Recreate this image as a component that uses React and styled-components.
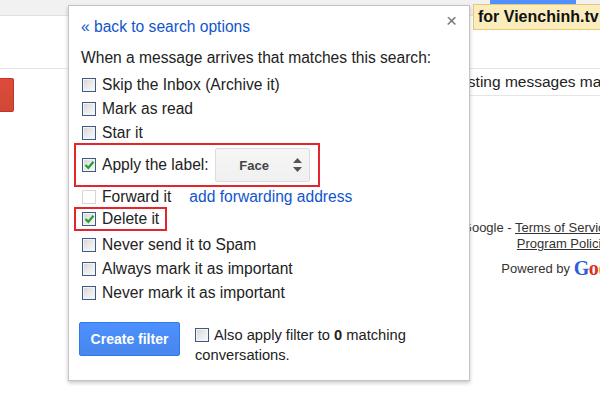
import React from 'react';
import styled, { createGlobalStyle } from 'styled-components';

const GlobalStyle = createGlobalStyle`
  html, body { margin: 0; padding: 0; background: #fff; }
  body {
    font-family: "Liberation Sans", Arial, sans-serif;
    color: #222;
    overflow: hidden;
  }
  * { box-sizing: border-box; }
`;

const Page = styled.div`
  position: relative;
  width: 600px;
  height: 402px;
  overflow: hidden;
  background: #fff;
`;

const TopBar = styled.div`
  height: 16px;
  background: #f1f1f1;
  border-bottom: 1px solid #e1e1e1;
`;

const Toolbar = styled.div`
  height: 53px;
  border-bottom: 1px solid #e5e5e5;
`;

const Body = styled.div`
  display: grid;
  grid-template-columns: 68px 1fr;
`;

const Sidebar = styled.div`
  padding-top: 9px;
`;

const ComposeButton = styled.div`
  width: 14px;
  height: 34px;
  border-radius: 0 2px 2px 0;
  background: linear-gradient(#dd4b39, #d14836);
  border: 1px solid #c6322a;
  border-left: none;
`;

const Main = styled.div`
  white-space: nowrap;
`;

const ResultRow = styled.div`
  height: 27px;
  line-height: 26px;
  padding-left: 287px;
  font-size: 15.5px;
  border-bottom: 1px solid #e5e5e5;
`;

const Footer = styled.div`
  margin-top: 124px;
  margin-left: 298px;
  width: 400px;
  text-align: center;
  font-size: 13px;
  color: #333;
`;

const FooterLine = styled.div`
  line-height: 16px;
  margin-top: ${p => p.$gap || 0}px;
`;

const FooterLink = styled.span`
  text-decoration: underline;
`;

const GoogleLogo = styled.span`
  font-family: "Liberation Serif", "Times New Roman", serif;
  font-size: 20px;
  font-weight: bold;
  letter-spacing: -0.5px;
  vertical-align: -2px;
`;

const LogoLetter = styled.span`
  color: ${p => p.$c};
`;

const Banner = styled.div`
  position: absolute;
  top: 4px;
  left: 473px;
  right: 0;
  height: 26px;
  padding-left: 4px;
  background: #f9edbe;
  border: 1px solid #f0c36d;
  border-right: none;
  font-size: 16px;
  font-weight: bold;
  line-height: 24px;
  color: #111;
  white-space: nowrap;
`;

const BlueTab = styled.div`
  position: absolute;
  top: 0;
  left: 490px;
  width: 86px;
  height: 4px;
  background: #4d90fe;
`;

const Dialog = styled.div`
  position: absolute;
  left: 68px;
  top: 5px;
  width: 402px;
  height: 376px;
  background: #fff;
  border: 1px solid #c4c4c4;
  box-shadow: 0 2px 4px rgba(0, 0, 0, 0.22);
  padding: 11px 12px 0 12px;
  font-size: 15.6px;
  color: #222;
`;

const Header = styled.div`
  display: flex;
  justify-content: space-between;
  align-items: flex-start;
`;

const BackLink = styled.a`
  color: #15c;
  line-height: 20px;
  text-decoration: none;
`;

const Close = styled.span`
  font-size: 19px;
  line-height: 20px;
  color: #777;
  margin-top: -6px;
  margin-right: 0px;
`;

const Intro = styled.div`
  margin-top: 11px;
  line-height: 20px;
`;

const Options = styled.div`
  margin-top: 5px;
  display: flex;
  flex-direction: column;
`;

const Option = styled.div`
  display: flex;
  align-items: center;
  gap: 6px;
  height: 24px;
  padding-left: 1px;
  margin-top: ${p => p.$shift || 0}px;
`;

const Highlight = styled.div`
  display: flex;
  align-items: center;
  gap: 6px;
  width: ${p => p.$w}px;
  height: ${p => p.$h}px;
  margin-left: -7px;
  margin-top: -2px;
  padding-left: 6px;
  border: 2px solid #e5252b;
`;

const Box = styled.span`
  flex: none;
  display: inline-flex;
  align-items: center;
  justify-content: center;
  width: 14px;
  height: 14px;
  border: 1px solid ${p => (p.$disabled ? '#d6d6d6' : '#3c5a86')};
  background: ${p =>
    p.$disabled ? '#fff' : 'linear-gradient(135deg, #d4d4d4 0%, #ececec 55%, #f8f8f8 100%)'};
  box-shadow: ${p => (p.$disabled ? 'none' : 'inset 0 0 0 1px #f4f4f4')};
`;

const Link = styled.span`
  color: #15c;
  margin-left: 12px;
`;

const SelectBox = styled.div`
  display: flex;
  align-items: center;
  width: 95px;
  height: 34px;
  padding-right: 7px;
  border: 1px solid #dcdcdc;
  border-radius: 2px;
  background: linear-gradient(#f6f6f6, #f0f0f0);
`;

const SelectValue = styled.span`
  flex: 1;
  text-align: center;
  font-size: 13px;
  font-weight: bold;
  color: #444;
`;

const FilterFooter = styled.div`
  display: flex;
  align-items: flex-start;
  margin-top: 17px;
`;

const CreateButton = styled.button`
  width: 101px;
  height: 34px;
  margin-left: -2px;
  border: 1px solid #3079ed;
  border-radius: 2px;
  background: linear-gradient(#4d90fe, #4787ed);
  color: #fff;
  font-family: "Liberation Sans", Arial, sans-serif;
  font-size: 14px;
  font-weight: bold;
  padding: 0;
`;

const AlsoApply = styled.div`
  margin-left: 15px;
  margin-top: 3px;
  width: 240px;
  font-size: 14.7px;
  line-height: 20px;
  & > span:first-child {
    display: inline-flex;
    vertical-align: -2px;
    margin-right: 5px;
  }
`;

function Checkbox({ checked, disabled }) {
  return (
    <Box $disabled={disabled}>
      {checked && (
        <svg width="11" height="10" viewBox="0 0 11 10">
          <polyline points="1.5,5 4.3,7.8 9.5,1.8" fill="none" stroke="#23a12b" strokeWidth="2.2" />
        </svg>
      )}
    </Box>
  );
}

function Arrows() {
  return (
    <svg width="9" height="14" viewBox="0 0 9 14">
      <path d="M4.5 0 L9 5 H0 Z" fill="#555" />
      <path d="M0 9 H9 L4.5 14 Z" fill="#555" />
    </svg>
  );
}

const plainOptions = ['Never send it to Spam', 'Always mark it as important', 'Never mark it as important'];

function App() {
  return (
    <Page>
      <GlobalStyle />
      <TopBar />
      <Toolbar />
      <Body>
        <Sidebar>
          <ComposeButton />
        </Sidebar>
        <Main>
          <ResultRow>Also apply to existing messages matching this search</ResultRow>
          <Footer>
            <FooterLine>
              ©2012 Google - <FooterLink>Terms of Service</FooterLink> - <FooterLink>Privacy Policy</FooterLink> -
            </FooterLine>
            <FooterLine>
              <FooterLink>Program Policies</FooterLink>
            </FooterLine>
            <FooterLine $gap={8}>
              Powered by{' '}
              <GoogleLogo>
                <LogoLetter $c="#2b5fd9">G</LogoLetter>
                <LogoLetter $c="#d8322a">o</LogoLetter>
                <LogoLetter $c="#f0b315">o</LogoLetter>
                <LogoLetter $c="#2b5fd9">g</LogoLetter>
                <LogoLetter $c="#1d9a3c">l</LogoLetter>
                <LogoLetter $c="#d8322a">e</LogoLetter>
              </GoogleLogo>
            </FooterLine>
          </Footer>
        </Main>
      </Body>

      <BlueTab />
      <Banner>for Vienchinh.tv</Banner>

      <Dialog>
        <Header>
          <BackLink href="#">« back to search options</BackLink>
          <Close>×</Close>
        </Header>
        <Intro>When a message arrives that matches this search:</Intro>
        <Options>
          <Option><Checkbox />Skip the Inbox (Archive it)</Option>
          <Option><Checkbox />Mark as read</Option>
          <Option><Checkbox />Star it</Option>
          <Highlight $w={246} $h={44}>
            <Checkbox checked />
            Apply the label:
            <SelectBox>
              <SelectValue>Face</SelectValue>
              <Arrows />
            </SelectBox>
          </Highlight>
          <Option $shift={-2}>
            <Checkbox disabled />
            Forward it
            <Link>add forwarding address</Link>
          </Option>
          <Highlight $w={93} $h={24}>
            <Checkbox checked />
            Delete it
          </Highlight>
          <Option $shift={2}><Checkbox />{plainOptions[0]}</Option>
          <Option><Checkbox />{plainOptions[1]}</Option>
          <Option><Checkbox />{plainOptions[2]}</Option>
        </Options>
        <FilterFooter>
          <CreateButton>Create filter</CreateButton>
          <AlsoApply>
            <Checkbox />
            Also apply filter to <b>0</b> matching conversations.
          </AlsoApply>
        </FilterFooter>
      </Dialog>
    </Page>
  );
}

export default App;
